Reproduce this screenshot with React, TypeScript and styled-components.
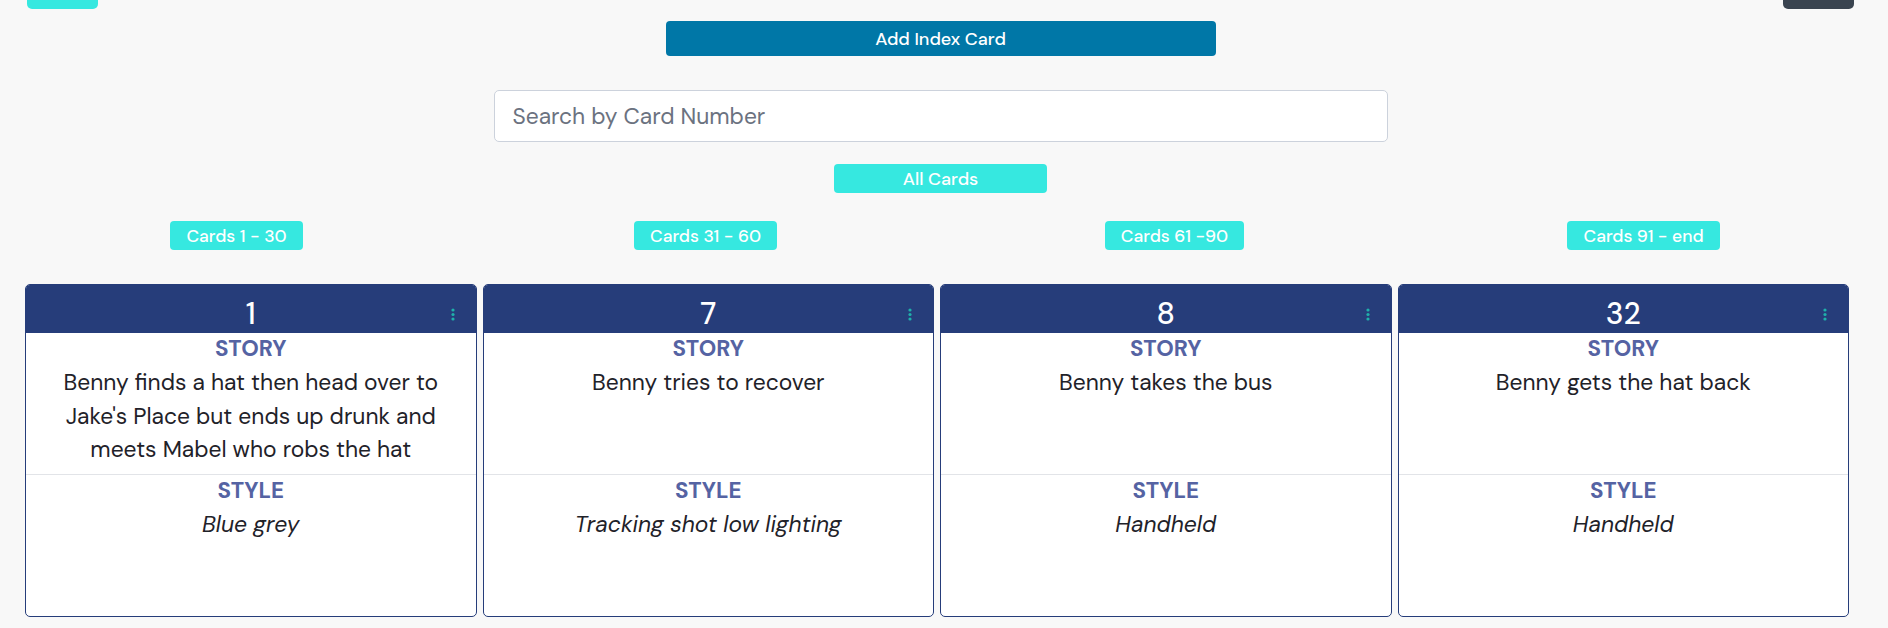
import React from 'react';
import styled, { createGlobalStyle } from 'styled-components';

const GlobalStyle = createGlobalStyle`
  html, body {
    margin: 0;
    padding: 0;
    background: #f8f8f8;
    font-family: "DM Sans", Inter, "Liberation Sans", sans-serif;
  }
  * { box-sizing: border-box; }
`;

const Page = styled.div`
  width: 1888px;
  min-height: 628px;
  background: #f8f8f8;
  overflow: hidden;
`;

const TopBar = styled.div`
  display: flex;
  justify-content: space-between;
  padding: 0 34px 0 27px;
  margin-top: -21px;
`;

const TopButton = styled.button<{ $dark?: boolean }>`
  width: 71px;
  height: 30px;
  border: none;
  border-radius: 5px;
  background: ${(p) => (p.$dark ? '#3a4450' : '#36e8e0')};
`;

const Center = styled.div`
  display: flex;
  flex-direction: column;
  align-items: center;
  padding-right: 7px;
`;

const AddButton = styled.button`
  margin-top: 12px;
  width: 550px;
  height: 35px;
  border: none;
  border-radius: 4px;
  background: #0077a7;
  color: #fff;
  font-family: inherit;
  font-size: 18px;
  font-weight: 500;
`;

const SearchInput = styled.input`
  margin-top: 34px;
  width: 894px;
  height: 52px;
  padding: 0 18px;
  border: 1px solid #ccd2dc;
  border-radius: 5px;
  background: #fff;
  font-family: inherit;
  font-size: 22.8px;
  color: #212529;
  outline: none;
  &::placeholder {
    color: #6b7280;
  }
`;

const PillButton = styled.button<{ $wide?: boolean }>`
  height: 29px;
  padding: 0 16px;
  width: ${(p) => (p.$wide ? '213px' : 'auto')};
  border: none;
  border-radius: 4px;
  background: #36e8e0;
  color: #fff;
  font-family: inherit;
  font-size: ${(p) => (p.$wide ? '18px' : '17.5px')};
  font-weight: 500;
  white-space: nowrap;
`;

const AllWrap = styled.div`
  margin-top: 22px;
`;

const FilterRow = styled.div`
  display: grid;
  grid-template-columns: repeat(4, 469px);
  padding-left: 2px;
  margin-top: 28px;
  justify-items: center;
`;

const CardGrid = styled.div`
  display: grid;
  grid-template-columns: repeat(4, 1fr);
  gap: 6px;
  padding: 0 39px 0 25px;
  margin-top: 34px;
`;

const Card = styled.div`
  border: 1px solid #263d7a;
  border-radius: 5px;
  background: #fff;
  overflow: hidden;
`;

const CardHead = styled.div`
  display: grid;
  grid-template-columns: 1fr auto 1fr;
  align-items: center;
  height: 48px;
  padding: 9px 21px 0;
  background: #263d7a;
  color: #fff;
`;

const CardNumber = styled.div`
  grid-column: 2;
  font-size: 30px;
  font-weight: 500;
  line-height: 39px;
  text-align: center;
`;

const Kebab = styled.svg`
  justify-self: end;
  width: 4px;
  height: 13px;
  margin-top: 2px;
`;

const Section = styled.div<{ $divider?: boolean }>`
  height: ${(p) => (p.$divider ? '142px' : '141px')};
  padding: 3px 14px 0;
  text-align: center;
  border-top: ${(p) => (p.$divider ? '1px solid #e2e4e8' : 'none')};
`;

const Label = styled.div`
  font-size: 22.4px;
  font-weight: 700;
  line-height: 26px;
  color: #5563a3;
  margin-bottom: 4px;
`;

const Body = styled.div<{ $italic?: boolean }>`
  font-size: 22.8px;
  line-height: 33.6px;
  color: #1f2229;
  font-style: ${(p) => (p.$italic ? 'italic' : 'normal')};
`;

const cards = [
  { num: 1, story: 'Benny finds a hat then head over to Jake\'s Place but ends up drunk and meets Mabel who robs the hat', style: 'Blue grey' },
  { num: 7, story: 'Benny tries to recover', style: 'Tracking shot low lighting' },
  { num: 8, story: 'Benny takes the bus', style: 'Handheld' },
  { num: 32, story: 'Benny gets the hat back', style: 'Handheld' },
];

const ranges = ['Cards 1 - 30', 'Cards 31 - 60', 'Cards 61 -90', 'Cards 91 - end'];

function KebabIcon() {
  return (
    <Kebab viewBox="0 0 4 13">
      <circle cx="2" cy="2" r="1.6" fill="#1fb0aa" />
      <circle cx="2" cy="6.5" r="1.6" fill="#1fb0aa" />
      <circle cx="2" cy="11" r="1.6" fill="#1fb0aa" />
    </Kebab>
  );
}

export default function App() {
  return (
    <Page>
      <GlobalStyle />
      <TopBar>
        <TopButton />
        <TopButton $dark />
      </TopBar>
      <Center>
        <AddButton>Add Index Card</AddButton>
        <SearchInput placeholder="Search by Card Number" />
        <AllWrap>
          <PillButton $wide>All Cards</PillButton>
        </AllWrap>
      </Center>
      <FilterRow>
        {ranges.map((r) => (
          <PillButton key={r}>{r}</PillButton>
        ))}
      </FilterRow>
      <CardGrid>
        {cards.map((c) => (
          <Card key={c.num}>
            <CardHead>
              <CardNumber>{c.num}</CardNumber>
              <KebabIcon />
            </CardHead>
            <Section>
              <Label>STORY</Label>
              <Body>{c.story}</Body>
            </Section>
            <Section $divider>
              <Label>STYLE</Label>
              <Body $italic>{c.style}</Body>
            </Section>
          </Card>
        ))}
      </CardGrid>
    </Page>
  );
}
